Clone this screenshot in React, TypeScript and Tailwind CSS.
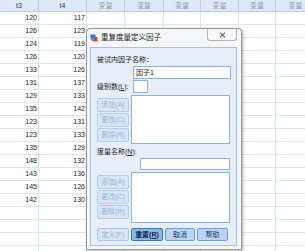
import React from "react";

const cols = ["w-[39px]", "w-[48px]", "w-[38px]", "w-[39px]", "w-[37px]", "w-[38px]", "w-[37px]", "w-[40px]"];
const heads = ["t3", "t4", "变量", "变量", "变量", "变量", "变量", "变量"];

const t3 = [120, 126, 124, 126, 133, 131, 129, 135, 123, 123, 135, 148, 143, 145, 142];
const t4 = [117, 123, 119, 120, 126, 137, 133, 142, 131, 133, 129, 132, 136, 126, 130];

const font = { fontFamily: '"Liberation Sans", "Noto Sans CJK SC", sans-serif' };

const DisabledBtn: React.FC<{ label: string }> = ({ label }) => (
  <div className="h-[14px] w-[32px] rounded-[2px] border border-[#b3cdea] bg-[#d6e5f5] text-[7px] leading-[12px] text-center text-[#9db6d3]">
    {label}
  </div>
);

const Sheet: React.FC = () => (
  <div className="flex flex-col">
    <div className="flex h-[12px] bg-[#dde9f6] border-b border-[#b9cfe6]">
      {heads.map((h, i) => (
        <div
          key={i}
          className={`${cols[i]} shrink-0 border-r border-[#b9cfe6] text-center text-[7px] leading-[11px] ${
            i < 2 ? "text-[#303a46]" : "text-[#8f9aa6]"
          }`}
        >
          {h}
        </div>
      ))}
    </div>
    {Array.from({ length: 19 }).map((_, r) => (
      <div key={r} className="flex h-[13px] border-b border-[#dbe6f1]">
        {cols.map((c, i) => (
          <div
            key={i}
            className={`${c} shrink-0 border-r border-[#dbe6f1] text-right pr-[1px] text-[7px] leading-[12px] text-[#1e1e1e]`}
          >
            {i === 0 && r < t3.length ? t3[r] : i === 1 && r < t4.length ? t4[r] : ""}
          </div>
        ))}
      </div>
    ))}
  </div>
);

const Dialog: React.FC = () => (
  <div className="absolute left-[86px] top-[28px] w-[156px] h-[222px] rounded-t-[4px] border border-[#9a9a9a] bg-[#f4f6f9] shadow-[1px_1px_3px_rgba(0,0,0,0.35)] flex flex-col">
    <div className="h-[17px] flex items-center relative">
      <svg width="8" height="8" viewBox="0 0 8 8" className="ml-[3px]">
        <rect x="0.5" y="0.5" width="5" height="5" fill="#3b78c4" />
        <rect x="3" y="3" width="4.5" height="4.5" fill="#d8453b" />
        <rect x="1.5" y="4" width="2" height="3" fill="#5aa0e0" />
      </svg>
      <span className="ml-[3px] text-[7.5px] leading-[10px] text-[#1a1a1a]">重复度量定义因子</span>
      <div className="absolute right-[4px] top-0 w-[30px] h-[12px] rounded-b-[3px] border border-t-0 border-[#b5b5b5] bg-[#f7f7f7] flex items-center justify-center">
        <svg width="7" height="6" viewBox="0 0 7 6">
          <path d="M1 0.8 L6 5.2 M6 0.8 L1 5.2" stroke="#7a7a7a" strokeWidth="1.3" />
        </svg>
      </div>
    </div>
    <div className="ml-[3px] mt-[1px] w-[147px] h-[199px] border border-[#a9c3de] bg-[#e6eff9] flex flex-col px-[6px]">
      <div className="mt-[6px] h-[12px] text-[7px] leading-[12px] text-[#1a1a1a]">被试内因子名称：</div>
      <div className="ml-[36px] w-[98px] h-[13px] border border-[#8fb3d6] bg-white text-[7px] leading-[11px] pl-[2px] text-[#1a1a1a]">
        因子1
      </div>
      <div className="mt-[1px] flex h-[13px] items-center">
        <span className="w-[36px] text-[7px] leading-[12px] text-[#1a1a1a]">
          级别数(<span className="underline">L</span>):
        </span>
        <div className="w-[15px] h-[13px] border border-[#8fb3d6] bg-white" />
      </div>
      <div className="mt-[2px] flex">
        <div className="w-[32px] pt-[3px] flex flex-col gap-[1px]">
          <DisabledBtn label="添加(A)" />
          <DisabledBtn label="更改(C)" />
          <DisabledBtn label="删除(R)" />
        </div>
        <div className="ml-[2px] w-[100px] h-[49px] border border-[#8fb3d6] bg-white" />
      </div>
      <div className="mt-[2px] h-[12px] text-[7px] leading-[12px] text-[#1a1a1a]">
        度量名称(<span className="underline">N</span>):
      </div>
      <div className="ml-[43px] w-[90px] h-[12px] border border-[#8fb3d6] bg-white" />
      <div className="mt-[2px] flex">
        <div className="w-[32px] pt-[3px] flex flex-col gap-[1px]">
          <DisabledBtn label="添加(A)" />
          <DisabledBtn label="更改(C)" />
          <DisabledBtn label="删除(R)" />
        </div>
        <div className="ml-[2px] w-[100px] h-[51px] border border-[#8fb3d6] bg-white" />
      </div>
      <div className="mt-[5px] flex gap-[2px] h-[13px]">
        <div className="w-[32px] h-[13px] rounded-[2px] border border-[#a9c6e6] bg-[#d6e5f5] text-[7px] leading-[11px] text-center text-[#9db6d3]">
          定义(F)
        </div>
        <div className="w-[32px] h-[13px] rounded-[2px] border border-[#3f74b4] bg-[#8ab7e8] text-[7px] leading-[11px] text-center font-bold text-[#10294d]">
          重置(<span className="underline">R</span>)
        </div>
        <div className="w-[30px] h-[13px] rounded-[2px] border border-[#6f9fd4] bg-[#b8d4f2] text-[7px] leading-[11px] text-center text-[#1d3a63]">
          取消
        </div>
        <div className="w-[31px] h-[13px] rounded-[2px] border border-[#6f9fd4] bg-[#b8d4f2] text-[7px] leading-[11px] text-center text-[#1d3a63]">
          帮助
        </div>
      </div>
    </div>
  </div>
);

export default function App() {
  return (
    <div className="relative w-[305px] h-[251px] overflow-hidden bg-white" style={font}>
      <Sheet />
      <Dialog />
    </div>
  );
}
